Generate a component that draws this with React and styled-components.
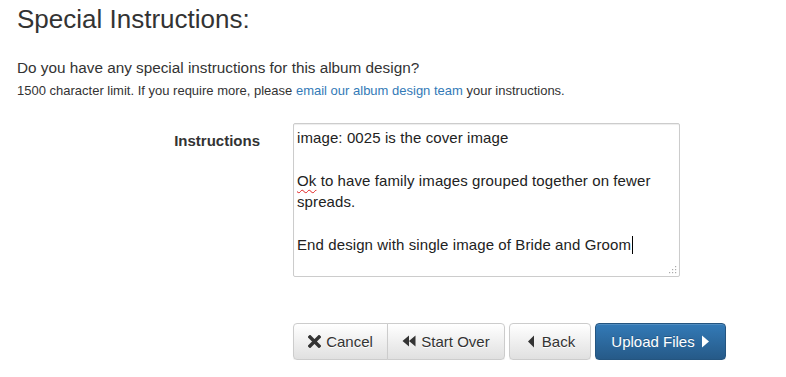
import React from "react";
import styled, { createGlobalStyle } from "styled-components";

const GlobalStyle = createGlobalStyle`
  html, body {
    margin: 0;
    padding: 0;
    background: #fff;
    color: #333;
    font-family: "Liberation Sans", Arial, sans-serif;
  }
`;

const Page = styled.div`
  padding: 5px 17px 0;
`;

const Title = styled.h3`
  margin: 0;
  font-size: 26px;
  font-weight: 400;
  line-height: 1.1;
  color: #333;
`;

const Lead = styled.p`
  margin: 23px 0 0;
  font-size: 15.3px;
  line-height: 21px;
`;

const Note = styled.p`
  margin: 4px 0 0;
  font-size: 13px;
  line-height: 17px;
`;

const Link = styled.a`
  color: #337ab7;
  text-decoration: none;
`;

const FormRow = styled.div`
  display: grid;
  grid-template-columns: 243px 387px;
  column-gap: 33px;
  margin-top: 24px;
`;

const Label = styled.label`
  padding-top: 8px;
  text-align: right;
  font-size: 15px;
  font-weight: 700;
  line-height: 20px;
`;

const TextBox = styled.div`
  position: relative;
  box-sizing: border-box;
  height: 154px;
  padding: 3px 3px;
  border: 1px solid #ccc;
  border-radius: 2px;
  box-shadow: inset 0 1px 1px rgba(0, 0, 0, 0.075);
  font-size: 15px;
  letter-spacing: 0.1px;
  line-height: 21.5px;
  color: #222;
`;

const Line = styled.div`
  min-height: 21.5px;
`;

const Misspelled = styled.span`
  text-decoration: underline wavy #e02020;
  text-decoration-thickness: 1px;
  text-underline-offset: 3px;
`;

const Caret = styled.span`
  display: inline-block;
  width: 1px;
  height: 18px;
  margin-left: 1px;
  background: #000;
  vertical-align: -4px;
`;

const Grip = styled.svg`
  position: absolute;
  right: 2px;
  bottom: 2px;
`;

const Actions = styled.div`
  display: flex;
  margin: 46px 0 0 276px;
`;

const Group = styled.div`
  display: flex;
  margin-right: 4px;
`;

const Button = styled.button`
  display: inline-flex;
  align-items: center;
  justify-content: center;
  gap: 5px;
  width: ${(p) => p.$w}px;
  height: 37px;
  margin-right: ${(p) => p.$mr || 0}px;
  box-sizing: border-box;
  padding: 0;
  font-family: "Liberation Sans", Arial, sans-serif;
  font-size: 15px;
  color: ${(p) => (p.$primary ? "#fff" : "#333")};
  background: ${(p) =>
    p.$primary
      ? "linear-gradient(to bottom, #337ab7 0%, #265a88 100%)"
      : "linear-gradient(to bottom, #fff 0%, #e0e0e0 100%)"};
  border: 1px solid ${(p) => (p.$primary ? "#245580" : "#ccc")};
  border-radius: ${(p) => p.$radius || "4px"};
  box-shadow: inset 0 1px 0 rgba(255, 255, 255, 0.15), 0 1px 1px rgba(0, 0, 0, 0.075);
  text-shadow: ${(p) => (p.$primary ? "0 -1px 0 rgba(0,0,0,0.2)" : "0 1px 0 #fff")};
  cursor: pointer;
  & + & {
    margin-left: -1px;
  }
`;

const Icon = styled.svg`
  flex: none;
`;

const RemoveIcon = () => (
  <Icon width="13" height="13" viewBox="0 0 13 13">
    <path d="M2 2 L11 11 M11 2 L2 11" stroke="#333" strokeWidth="3.4" strokeLinecap="square" />
  </Icon>
);

const BackwardIcon = () => (
  <Icon width="14" height="12" viewBox="0 0 14 12">
    <path d="M0.5 6 L7 0.5 V11.5 Z M7 6 L13.5 0.5 V11.5 Z" fill="#333" />
  </Icon>
);

const TriangleLeft = () => (
  <Icon width="12" height="13" viewBox="0 0 12 13">
    <path d="M3 6.5 L9 0.5 V12.5 Z" fill="#333" />
  </Icon>
);

const TriangleRight = () => (
  <Icon width="10" height="13" viewBox="0 0 10 13">
    <path d="M9 6.5 L2 0.5 V12.5 Z" fill="#fff" />
  </Icon>
);

const App = () => (
  <>
    <GlobalStyle />
    <Page>
      <Title>Special Instructions:</Title>
      <Lead>Do you have any special instructions for this album design?</Lead>
      <Note>
        1500 character limit. If you require more, please{" "}
        <Link href="#">email our album design team</Link> your instructions.
      </Note>

      <FormRow>
        <Label>Instructions</Label>
        <TextBox>
          <Line>image: 0025 is the cover image</Line>
          <Line />
          <Line>
            <Misspelled>Ok</Misspelled> to have family images grouped together on fewer
          </Line>
          <Line>spreads.</Line>
          <Line />
          <Line>
            End design with single image of Bride and Groom<Caret />
          </Line>
          <Grip width="9" height="9" viewBox="0 0 9 9">
            <g fill="#aaa">
              <rect x="7" y="1" width="1.2" height="1.2" />
              <rect x="4" y="4" width="1.2" height="1.2" />
              <rect x="7" y="4" width="1.2" height="1.2" />
              <rect x="1" y="7" width="1.2" height="1.2" />
              <rect x="4" y="7" width="1.2" height="1.2" />
              <rect x="7" y="7" width="1.2" height="1.2" />
            </g>
          </Grip>
        </TextBox>
      </FormRow>

      <Actions>
        <Group>
          <Button $w={95} $radius="4px 0 0 4px">
            <RemoveIcon />
            Cancel
          </Button>
          <Button $w={118} $radius="0 4px 4px 0">
            <BackwardIcon />
            Start Over
          </Button>
        </Group>
        <Button $w={82} $mr={5}>
          <TriangleLeft />
          Back
        </Button>
        <Button $w={131} $primary>
          Upload Files
          <TriangleRight />
        </Button>
      </Actions>
    </Page>
  </>
);

export default App;
